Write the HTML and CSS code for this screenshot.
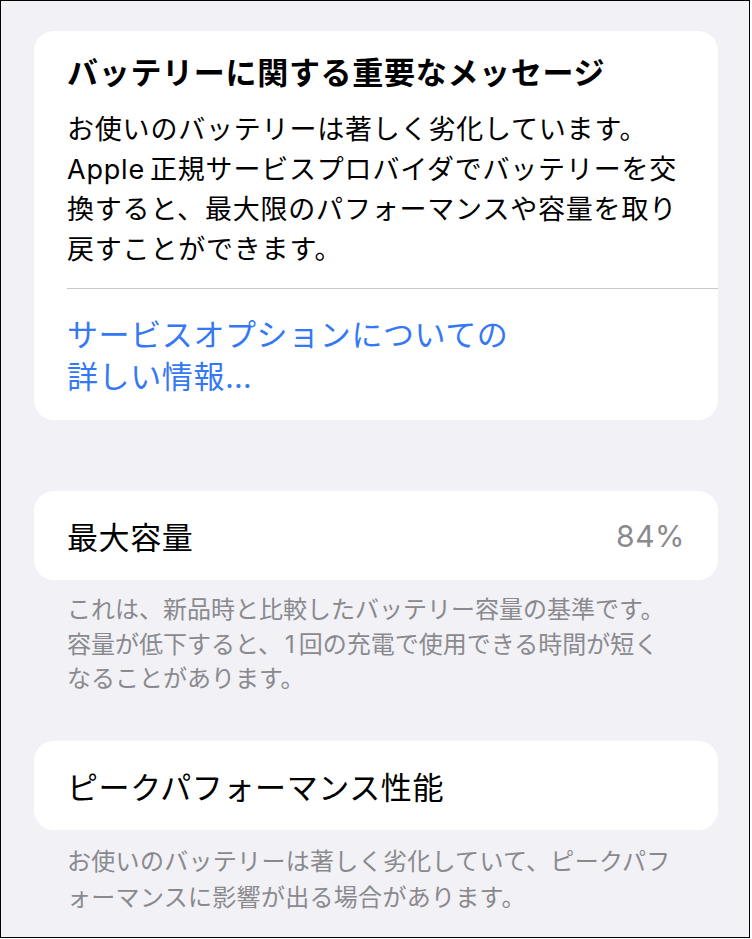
FILE: index.html
```html
<!DOCTYPE html>
<html lang="ja">
<head>
    <meta charset="UTF-8">
    <meta name="viewport" content="width=device-width, initial-scale=1.0">
    <title>バッテリーの状態</title>
    <link rel="stylesheet" href="styles.css">
</head>
<body>
    <div class="screen">
        <!-- Important message card -->
        <section class="card message">
            <div class="message-body">
                <h2>バッテリーに関する重要なメッセージ</h2>
                <p>お使いのバッテリーは著しく劣化しています。<br><span class="latin">Apple</span>正規サービスプロバイダでバッテリーを交<br>換すると、最大限のパフォーマンスや容量を取り<br>戻すことができます。</p>
            </div>
            <div class="divider"></div>
            <a href="#" class="link">サービスオプションについての<br>詳しい情報…</a>
        </section>

        <!-- Maximum capacity -->
        <section class="card row capacity">
            <span class="label">最大容量</span>
            <span class="value">84%</span>
        </section>
        <p class="note">これは、新品時と比較したバッテリー容量の基準です。<br>容量が低下すると、<span class="latin num">1</span>回の充電で使用できる時間が短く<br>なることがあります。</p>

        <!-- Peak performance -->
        <section class="card row peak">
            <span class="label">ピークパフォーマンス性能</span>
        </section>
        <p class="note note-last">お使いのバッテリーは著しく劣化していて、ピークパフ<br>ォーマンスに影響が出る場合があります。</p>
    </div>
</body>
</html>
```

FILE: styles.css
```css
/* Reset */
* {
    margin: 0;
    padding: 0;
    box-sizing: border-box;
}

body {
    font-family: Inter, "Noto Sans CJK JP", sans-serif;
    background-color: #fff;
    color: #000;
}

.screen {
    width: 750px;
    height: 938px;
    border: 1px solid #000;
    background-color: #f1f1f6;
    padding: 30px 31px 0 33px;
    overflow: hidden;
}

.card {
    background-color: #fff;
    border-radius: 20px;
}

.latin {
    margin-right: 5px;
}

.num {
    margin: 0 4px 0 3px;
}

/* Message card */
.message {
    padding: 22px 0 22px 0;
}

.message-body {
    padding: 0 33px;
}

.message h2 {
    font-size: 31px;
    font-weight: 700;
    line-height: 40px;
    letter-spacing: 0.7px;
}

.message p {
    margin-top: 17px;
    font-size: 27px;
    line-height: 40px;
    letter-spacing: 0.8px;
}

.divider {
    margin: 18px 0 25px 33px;
    height: 1px;
    background-color: #c8c7cc;
}

.link {
    display: block;
    padding: 0 33px;
    font-size: 31px;
    line-height: 42px;
    letter-spacing: 0.6px;
    color: #3478f6;
    text-decoration: none;
}

/* Single line rows */
.row {
    height: 89px;
    padding: 0 33px;
    display: flex;
    align-items: center;
    justify-content: space-between;
    font-size: 31px;
}

.row .label {
    letter-spacing: 0.6px;
}

.capacity {
    margin-top: 71px;
}

.row .value {
    color: #8a8a8e;
    font-size: 30px;
    letter-spacing: 0.5px;
}

.note {
    margin-top: 13px;
    padding-left: 33px;
    font-size: 24px;
    line-height: 34.5px;
    color: #8a8a8e;
}

.peak {
    margin-top: 44px;
}

.note-last {
    margin-top: 14px;
    line-height: 36px;
    letter-spacing: 0.3px;
}
```
